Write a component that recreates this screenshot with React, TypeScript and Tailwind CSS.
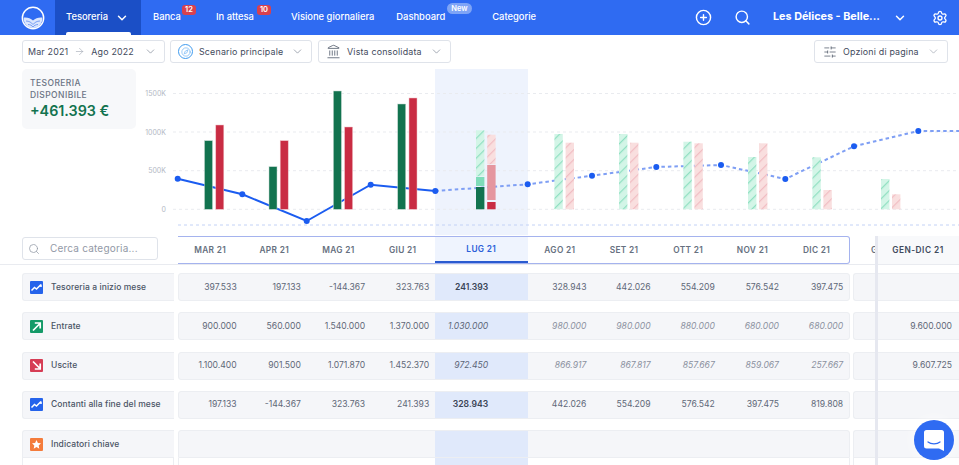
import { ArrowRight, ChevronDown, CirclePlus, Compass, Landmark, Search, Settings, SlidersHorizontal } from 'lucide-react';

const GREEN = '#12734f';
const RED = '#c92c43';

const months = ['MAR 21', 'APR 21', 'MAG 21', 'GIU 21', 'LUG 21', 'AGO 21', 'SET 21', 'OTT 21', 'NOV 21', 'DIC 21'];

const rows = [
  {
    label: 'Tesoreria a inizio mese',
    icon: 'trend',
    values: ['397.533', '197.133', '-144.367', '323.763', '241.393', '328.943', '442.026', '554.209', '576.542', '397.475'],
    total: '',
    forecast: false,
  },
  {
    label: 'Entrate',
    icon: 'in',
    values: ['900.000', '560.000', '1.540.000', '1.370.000', '1.030.000', '980.000', '980.000', '880.000', '680.000', '680.000'],
    total: '9.600.000',
    forecast: true,
  },
  {
    label: 'Uscite',
    icon: 'out',
    values: ['1.100.400', '901.500', '1.071.870', '1.452.370', '972.450', '866.917', '867.817', '857.667', '859.067', '257.667'],
    total: '9.607.725',
    forecast: true,
  },
  {
    label: 'Contanti alla fine del mese',
    icon: 'trend',
    values: ['197.133', '-144.367', '323.763', '241.393', '328.943', '442.026', '554.209', '576.542', '397.475', '819.808'],
    total: '',
    forecast: false,
  },
];

// bars in page coordinates: x, top of the bar
const pastBars = [
  { g: [204.5, 140.7], r: [215.8, 125] },
  { g: [269, 166.7], r: [280.2, 140.7] },
  { g: [333.4, 91], r: [344.6, 127] },
  { g: [397.7, 104], r: [409, 98] },
];
const futureBars = [
  { g: [554.4, 134], r: [565.6, 142.7] },
  { g: [619, 134], r: [630, 142.7] },
  { g: [683.4, 141.7], r: [694.4, 143.3] },
  { g: [748, 157], r: [759, 143.3] },
  { g: [812.4, 157.3], r: [823.4, 190] },
  { g: [881, 179], r: [892, 194.3] },
];

function Chart() {
  return (
    <svg width="819" height="166" viewBox="140 69 819 166" className="block shrink-0">
      <defs>
        <pattern id="hatchGreen" width="7" height="7" patternUnits="userSpaceOnUse" patternTransform="rotate(-45)">
          <rect width="7" height="7" fill="#d3f5e7" />
          <rect width="7" height="1.2" fill="#8fe0c1" />
        </pattern>
        <pattern id="hatchRed" width="7" height="7" patternUnits="userSpaceOnUse" patternTransform="rotate(-45)">
          <rect width="7" height="7" fill="#f9dfdf" />
          <rect width="7" height="1.2" fill="#f1bcc2" />
        </pattern>
      </defs>
      <rect x="435" y="69" width="93" height="166" fill="#eef3fd" />
      {[
        [93.5, '1500K'],
        [132, '1000K'],
        [170.7, '500K'],
        [209.3, '0'],
      ].map(([y, label]) => (
        <g key={label}>
          <line x1="173" x2="959" y1={y} y2={y} stroke="#e9ebef" strokeDasharray="3 3" />
          <text x="166" y={Number(y) + 2.5} textAnchor="end" fontSize="7" fill="#b4b9c4" fontFamily="Inter, sans-serif">
            {label}
          </text>
        </g>
      ))}
      <line x1="178" x2="959" y1="225" y2="225" stroke="#c3d2f6" strokeDasharray="3 3" />
      <polyline points="177.7,178.7 242.3,194.3 306.7,221 370.7,184.7 435.3,191" fill="none" stroke="#1b5cf0" strokeWidth="2" />
      <polyline
        points="435.3,191 527.7,184.3 592,175.7 656.3,167 721,165 785.3,179 854,146.3 918.3,131 959,131"
        fill="none"
        stroke="#7f9ff4"
        strokeWidth="2"
        strokeDasharray="3.5 3"
      />
      {pastBars.map((b) => (
        <g key={b.g[0]}>
          <rect x={b.g[0]} y={b.g[1]} width="8" height={209.3 - b.g[1]} fill={GREEN} stroke="#c3d8d0" strokeWidth="0.5" />
          <rect x={b.r[0]} y={b.r[1]} width="8" height={209.3 - b.r[1]} fill={RED} stroke="#efc0c6" strokeWidth="0.5" />
        </g>
      ))}
      {futureBars.map((b) => (
        <g key={b.g[0]}>
          <rect x={b.g[0]} y={b.g[1]} width="8.4" height={209.3 - b.g[1]} fill="url(#hatchGreen)" />
          <rect x={b.r[0]} y={b.r[1]} width="8.4" height={209.3 - b.r[1]} fill="url(#hatchRed)" />
        </g>
      ))}
      {/* current month, part actual and part forecast */}
      <rect x="476" y="130.3" width="8.4" height="46" fill="url(#hatchGreen)" />
      <rect x="476" y="177" width="8.4" height="9" fill="#7fdcb9" />
      <rect x="476" y="187" width="8.4" height="22.3" fill={GREEN} />
      <rect x="487.2" y="134.7" width="8.4" height="29.6" fill="url(#hatchRed)" />
      <rect x="487.2" y="165" width="8.4" height="35" fill="#e5969f" />
      <rect x="487.2" y="202" width="8.4" height="7.3" fill={RED} />
      {[
        [177.7, 178.7],
        [242.3, 194.3],
        [306.7, 221],
        [370.7, 184.7],
        [435.3, 191],
        [527.7, 184.3],
        [592, 175.7],
        [656.3, 167],
        [721, 165],
        [785.3, 179],
        [854, 146.3],
        [918.3, 131],
      ].map(([x, y]) => (
        <circle key={x} cx={x} cy={y} r="3" fill="#1b5cf0" />
      ))}
    </svg>
  );
}

function Logo() {
  return (
    <svg width="24" height="24" viewBox="0 0 24 24" fill="none" className="block">
      <circle cx="12" cy="12" r="10.7" stroke="#fff" strokeWidth="1.4" />
      <path d="M2.5 11.5 C6 11 9.5 12 12 14.5 C14.5 12 18 11 21.500 11.5 C21.500 18 17 22 12 22 C7 22 2.500 18 2.500 11.500 Z" fill="#dbe6fd" />
      <path d="M5 15 C8 15 10.500 16.500 12 18.500 C13.500 16.500 16 15 19 15 M7 18.500 C9 18.500 11 19.500 12 21 C13 19.500 15 18.500 17 18.500" stroke="#5d8bf3" strokeWidth="0.8" />
    </svg>
  );
}

function RowIcon({ kind }: { kind: string }) {
  if (kind === 'trend') {
    return (
      <svg width="13" height="13" viewBox="0 0 13 13" className="block shrink-0">
        <rect width="13" height="13" rx="1" fill="#2563eb" />
        <path d="M1.500 9.500 L4.500 6.500 L6.500 8 L11 3.500 M11 3.500 V6" fill="none" stroke="#fff" strokeWidth="1.500" />
      </svg>
    );
  }
  if (kind === 'in') {
    return (
      <svg width="13" height="13" viewBox="0 0 13 13" className="block shrink-0">
        <rect width="13" height="13" rx="1" fill="#149a68" />
        <path d="M3 10.500 L9.500 4 M4.800 3 H10.200 V8.400" fill="none" stroke="#fff" strokeWidth="1.700" />
      </svg>
    );
  }
  if (kind === 'out') {
    return (
      <svg width="13" height="13" viewBox="0 0 13 13" className="block shrink-0">
        <rect width="13" height="13" rx="1" fill="#d63d55" />
        <path d="M3 2.500 L9.500 9 M10.200 4.600 V10 H4.800" fill="none" stroke="#fff" strokeWidth="1.700" />
      </svg>
    );
  }
  return (
    <svg width="13" height="13" viewBox="0 0 13 13" className="block shrink-0">
      <rect width="13" height="13" rx="1" fill="#f47c3c" />
      <path d="M6.500 2 L7.900 4.900 L11 5.300 L8.700 7.500 L9.300 10.700 L6.500 9.100 L3.700 10.700 L4.300 7.500 L2 5.300 L5.100 4.900 Z" fill="#fff" />
    </svg>
  );
}

function Dropdown({ className, children }: { className: string; children: React.ReactNode }) {
  return (
    <div className={`flex h-[23px] items-center whitespace-nowrap rounded-[3px] border border-[#dfe3ea] bg-white text-[8.900px] tracking-[0.02em] text-[#3f4a5c] ${className}`}>
      {children}
    </div>
  );
}

function TableRow({ row }: { row: (typeof rows)[number] }) {
  return (
    <div className="mb-[11.25px] flex h-[28px] pl-[22px]">
      <div className="flex w-[152px] items-center gap-[8px] whitespace-nowrap rounded-l-[3px] border border-r-0 border-[#eceef2] bg-[#f5f6f9] pl-[7px] text-[8.500px] font-medium tracking-[0.01em] text-[#4a5465]">
        <RowIcon kind={row.icon} />
        {row.label}
      </div>
      <div className="ml-[3.5px] flex w-[672.500px] rounded-[3px] border border-[#eceef2] bg-[#f5f6f9] text-[8.600px] text-[#5f6878]">
        {row.values.map((v, i) => {
          const italic = row.forecast && i >= 4;
          return (
            <div
              key={months[i]}
              className={`flex shrink-0 items-center justify-end ${i === 4 ? 'w-[93px] bg-[#e0e9fb] pr-[40px]' : 'w-[64.200px] pr-[6px]'} ${italic ? 'italic' : ''} ${italic && i > 4 ? 'text-[#8b91a0]' : ''} ${italic && i === 4 ? 'text-[#5b6577]' : ''} ${!italic && i === 4 ? 'font-semibold text-[#3a4456]' : ''}`}
            >
              {v}
            </div>
          );
        })}
      </div>
      <div className="ml-[3px] flex w-[106px] items-center justify-end rounded-l-[3px] border border-r-0 border-[#eceef2] bg-[#f5f6f9] pr-[7px] text-[8.600px] text-[#5f6878]">
        {row.total}
      </div>
    </div>
  );
}

export default function App() {
  return (
    <div className="relative h-[465px] w-[959px] overflow-hidden bg-white font-['Inter',sans-serif]">
      {/* Top nav */}
      <nav className="flex h-[35px] items-center whitespace-nowrap bg-[#2f6bf2] text-[9.400px] font-medium text-white">
        <div className="flex w-[55px] justify-end pr-[10px]">
          <Logo />
        </div>
        <div className="relative flex h-full w-[86px] items-center bg-[#1b4fc6] pl-[11px]">
          Tesoreria
          <ChevronDown size={14} strokeWidth={2.5} className="ml-[7px]" />
          <span className="absolute bottom-0 left-[11px] h-[3px] w-[65px] rounded-t-[2px] bg-white" />
        </div>
        <span className="relative ml-[12px]">
          Banca
          <span className="absolute -top-[5px] left-[29px] rounded-[3px] bg-[#d9404f] px-[3px] text-[7.500px] font-semibold leading-[10px]">12</span>
        </span>
        <span className="relative ml-[35px]">
          In attesa
          <span className="absolute -top-[5px] left-[41px] rounded-[3px] bg-[#d9404f] px-[3px] text-[7.500px] font-semibold leading-[10px]">10</span>
        </span>
        <span className="ml-[37px]">Visione giornaliera</span>
        <span className="relative ml-[22px]">
          Dashboard
          <span className="absolute -top-[7px] left-[51px] rounded-full bg-[#7ea4f6] px-[4px] text-[7.500px] font-semibold leading-[11px]">New</span>
        </span>
        <span className="ml-[47px]">Categorie</span>
        <CirclePlus size={17} strokeWidth={2} className="ml-auto" />
        <Search size={17} strokeWidth={2} className="ml-[22px]" />
        <span className="ml-[22px] w-[109px] text-[10.800px] font-bold">Les Délices - Belle...</span>
        <ChevronDown size={14} strokeWidth={2.5} className="ml-[11px]" />
        <Settings size={16} strokeWidth={2} className="ml-[25px] mr-[11px]" />
      </nav>

      {/* Toolbar */}
      <div className="mt-[5px] flex pl-[22px] pr-[11px]">
        <Dropdown className="w-[143px] pl-[5px]">
          Mar 2021
          <ArrowRight size={11} strokeWidth={1.25} className="mx-[6px] text-[#9aa1ae]" />
          Ago 2022
          <ChevronDown size={13} strokeWidth={1.25} className="ml-auto mr-[7px] text-[#7a8291]" />
        </Dropdown>
        <Dropdown className="ml-[5px] w-[142px] pl-[7px]">
          <span className="flex h-[15px] w-[15px] items-center justify-center rounded-full border border-[#3f9bef]">
            <Compass size={10} strokeWidth={1.25} className="text-[#3f9bef]" />
          </span>
          <span className="ml-[6px]">Scenario principale</span>
          <ChevronDown size={13} strokeWidth={1.25} className="ml-auto mr-[7px] text-[#7a8291]" />
        </Dropdown>
        <Dropdown className="ml-[6px] w-[133px] pl-[7px]">
          <Landmark size={15} strokeWidth={1.25} className="text-[#4a5465]" />
          <span className="ml-[6px]">Vista consolidata</span>
          <ChevronDown size={13} strokeWidth={1.25} className="ml-auto mr-[7px] text-[#7a8291]" />
        </Dropdown>
        <Dropdown className="ml-auto w-[134px] pl-[8px]">
          <SlidersHorizontal size={14} strokeWidth={1.25} className="text-[#4a5465]" />
          <span className="ml-[6px]">Opzioni di pagina</span>
          <ChevronDown size={13} strokeWidth={1.25} className="ml-auto mr-[7px] text-[#9aa1ae]" />
        </Dropdown>
      </div>

      {/* KPI + chart */}
      <div className="mt-[6px] flex h-[167px] pl-[22px]">
        <div className="h-[60px] w-[114px] shrink-0 rounded-[5px] bg-[#f7f8fa] pl-[8px] pt-[8px]">
          <div className="text-[8.500px] font-medium leading-[12px] tracking-[0.05em] text-[#6b7484]">
            TESORERIA
            <br />
            DISPONIBILE
          </div>
          <div className="mt-[1px] text-[14.300px] font-semibold leading-[17px] text-[#12734f]">+461.393 €</div>
        </div>
        <div className="ml-[4px]">
          <Chart />
        </div>
      </div>

      {/* Table header */}
      <div className="flex h-[29px] border-b border-[#e9ebf0] pl-[22px]">
        <div className="mt-[1px] flex h-[23px] w-[136px] shrink-0 items-center whitespace-nowrap rounded-[3px] border border-[#dfe3ea] pl-[5px] text-[10px] tracking-[0.02em] text-[#9299a6]">
          <Search size={12} strokeWidth={1.5} className="mr-[10px] text-[#9299a6]" />
          Cerca categoria...
        </div>
        <div className="ml-[20px] flex h-[28px] w-[672px] shrink-0 rounded-r-[3px] border border-l-0 border-[#a5b3ee] text-[8.300px] font-semibold tracking-[0.04em] text-[#667080]">
          {months.map((m, i) => (
            <div
              key={m}
              className={`flex shrink-0 items-center justify-center ${i === 4 ? 'w-[93px] border-b-2 border-[#2a5bd0] bg-[#eff4fe] text-[#2b5fd9]' : 'w-[64.200px]'}`}
            >
              {m}
            </div>
          ))}
        </div>
        <div className="ml-[21px] flex h-full w-[6px] shrink-0 items-center text-[8.300px] font-semibold text-[#667080]">G</div>
        <div className="flex h-full w-[82px] shrink-0 items-center justify-center bg-[#f8f9fb] text-[8.300px] font-semibold tracking-[0.06em] text-[#3f4a5c]">
          GEN-DIC 21
        </div>
      </div>

      {/* Rows */}
      <div className="pt-[8px]">
        {rows.map((row) => (
          <TableRow key={row.label} row={row} />
        ))}
        <div className="flex h-[28px] pl-[22px]">
          <div className="flex w-[152px] items-center gap-[8px] whitespace-nowrap rounded-tl-[3px] border border-r-0 border-[#eceef2] bg-[#f5f6f9] pl-[7px] text-[8.500px] font-medium tracking-[0.01em] text-[#4a5465]">
            <RowIcon kind="star" />
            Indicatori chiave
          </div>
          <div className="ml-[3.500px] flex w-[672.500px] rounded-t-[3px] border border-[#eceef2] bg-[#f5f6f9]">
            <div className="ml-[256.800px] w-[93px] bg-[#e0e9fb]" />
          </div>
          <div className="ml-[3px] w-[106px] rounded-tl-[3px] border border-r-0 border-[#eceef2] bg-[#f5f6f9]" />
        </div>
        <div className="flex h-[8px] pl-[22px]">
          <div className="w-[152px] border-x border-[#eceef2]" />
          <div className="ml-[3.500px] w-[672.500px] border-x border-[#eceef2]">
            <div className="ml-[256.800px] h-full w-[93px] bg-[#e0e9fb]" />
          </div>
          <div className="ml-[3px] w-[106px] border-l border-[#eceef2]" />
        </div>
      </div>

      {/* Sticky total column divider */}
      <div className="absolute bottom-0 left-[875px] top-[236px] w-[3px] bg-[#e6e8f0]" />

      {/* Chat launcher */}
      <div className="absolute left-[914px] top-[420px] flex h-[40px] w-[40px] items-center justify-center rounded-full bg-[#2f6bf2] shadow-[0_0_14px_rgba(255,255,255,0.8)]">
        <svg width="22" height="23" viewBox="0 0 22 23">
          <path d="M3.500 1 H18.500 A2.500 2.500 0 0 1 21 3.500 V22 L16 19.500 H3.500 A2.500 2.500 0 0 1 1 17 V3.500 A2.500 2.500 0 0 1 3.500 1 Z" fill="#fff" />
          <path d="M5 13 C8 15.500 14 15.500 17 13" fill="none" stroke="#2f6bf2" strokeWidth="1.200" strokeLinecap="round" />
        </svg>
      </div>
    </div>
  );
}
